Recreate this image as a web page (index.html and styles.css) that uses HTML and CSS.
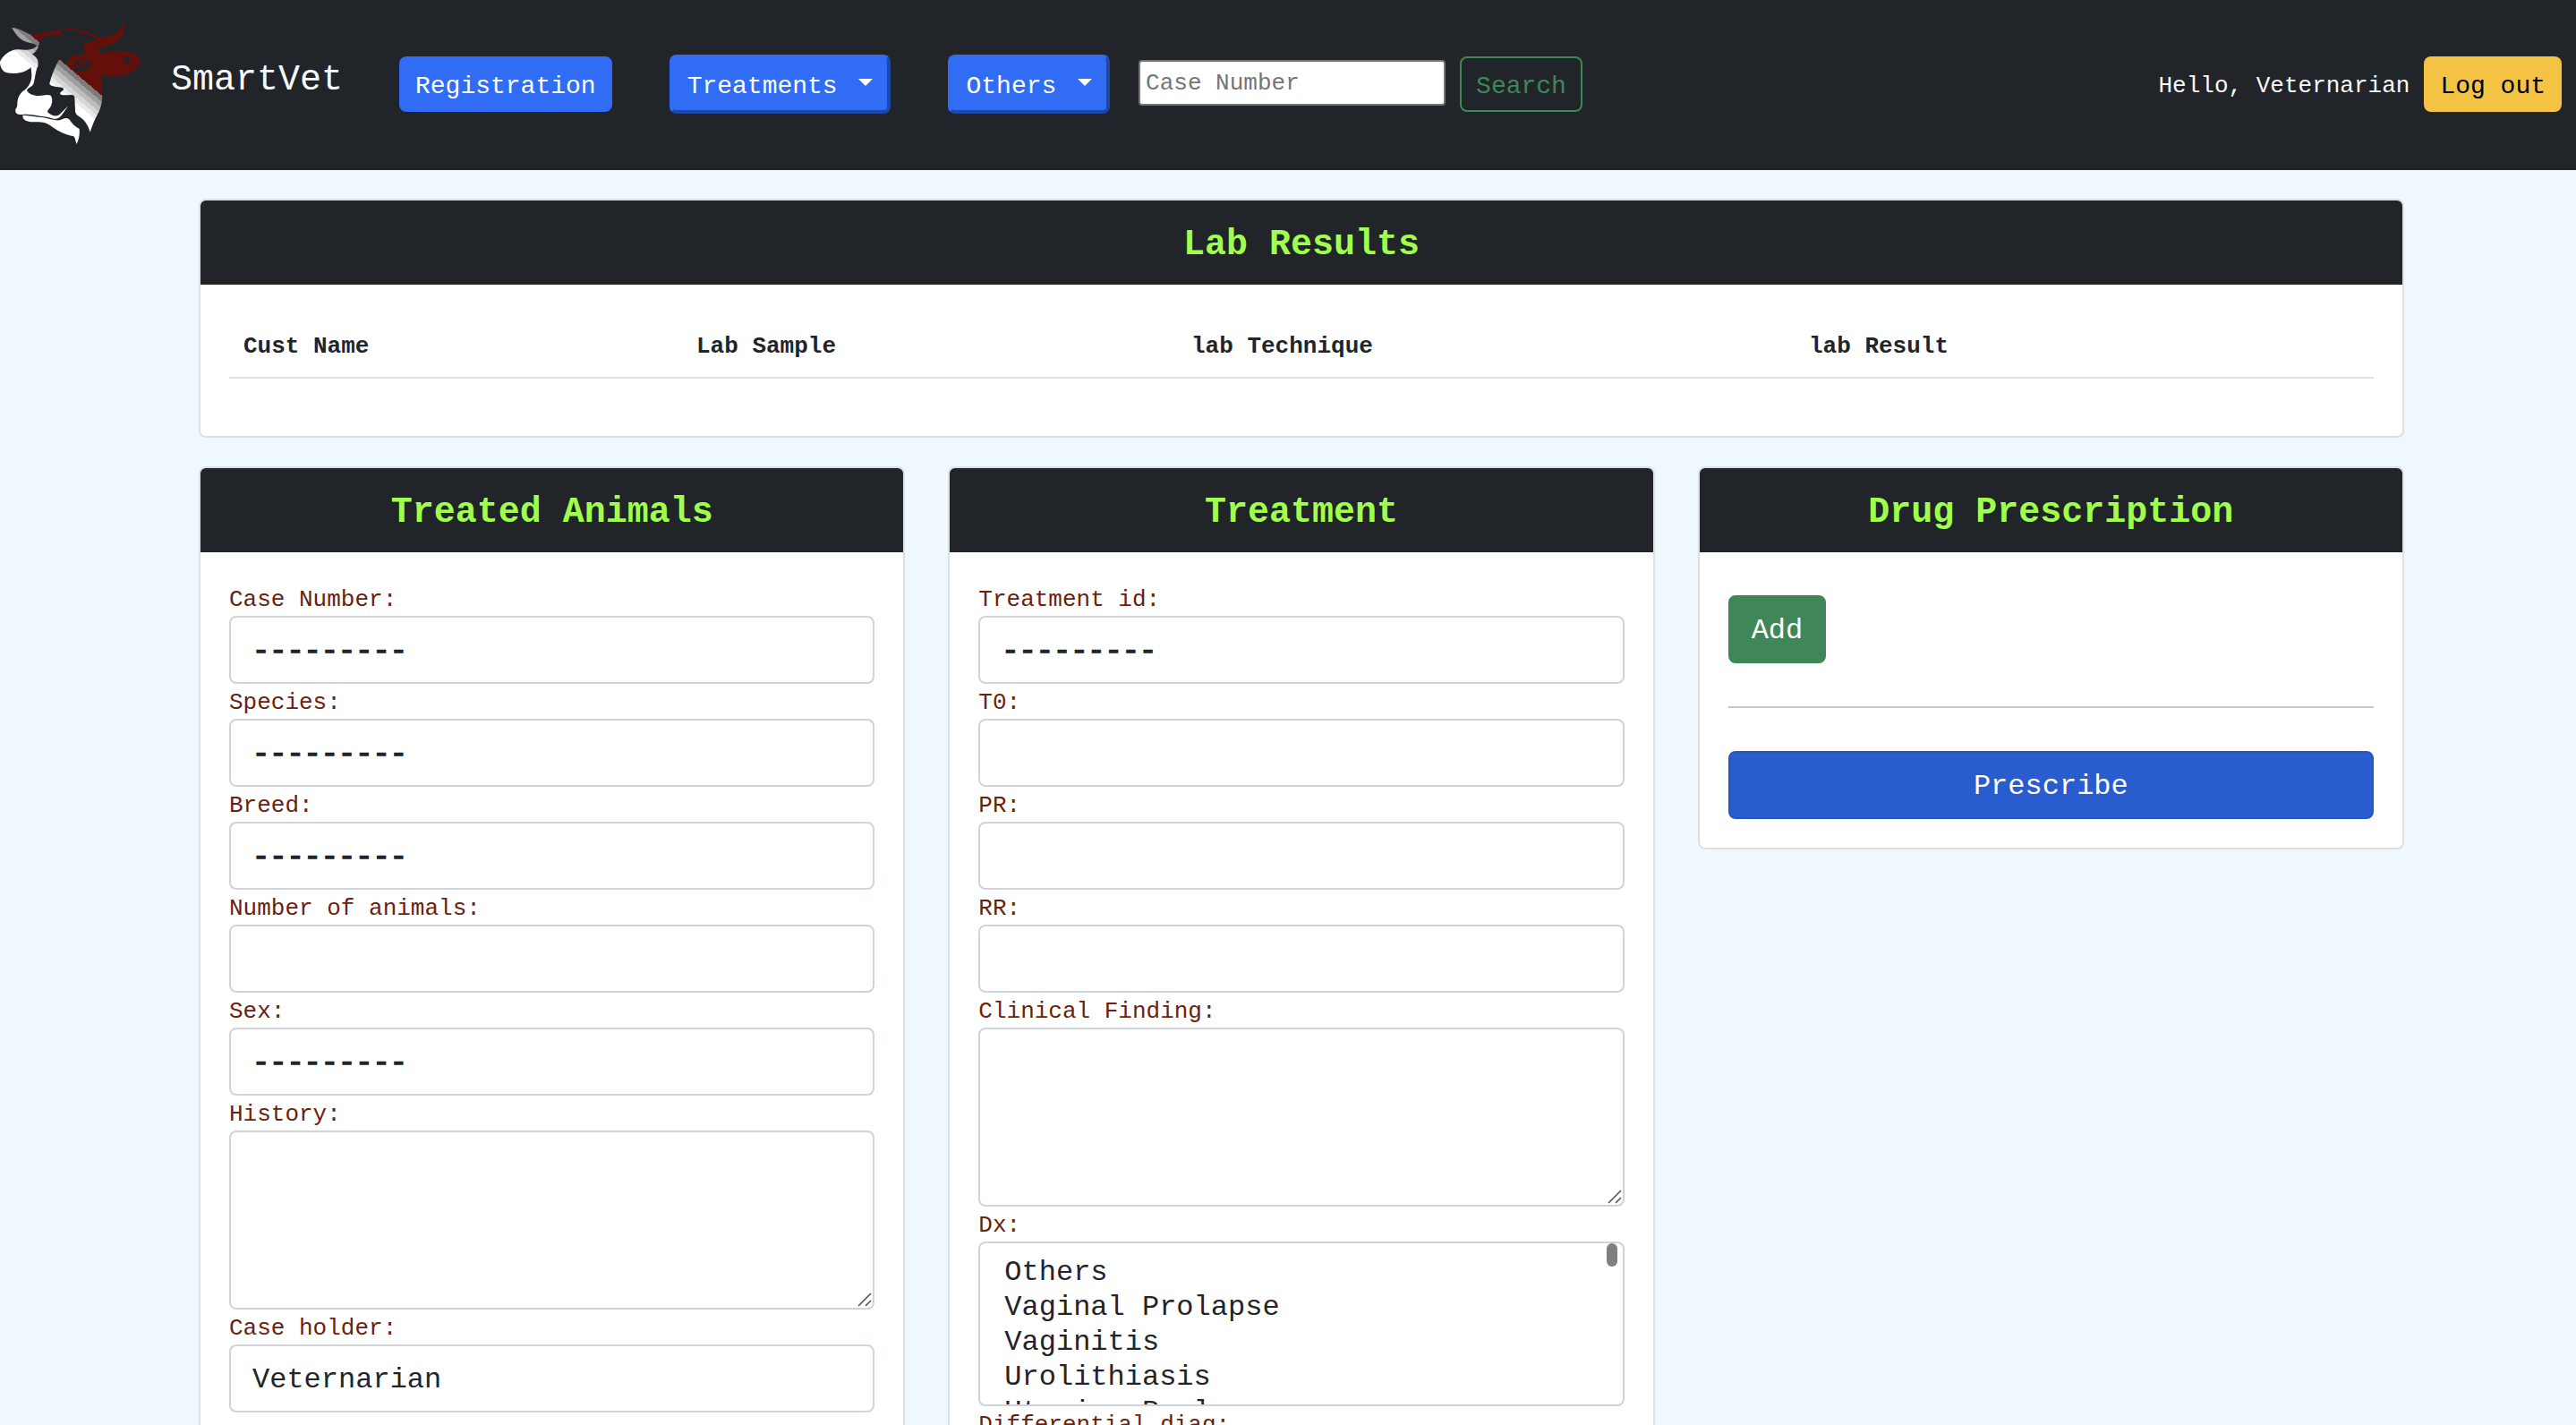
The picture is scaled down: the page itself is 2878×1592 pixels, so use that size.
FILE: index.html
```html
<!DOCTYPE html>
<html lang="en">
<head>
<meta charset="utf-8">
<title>SmartVet</title>
<link rel="stylesheet" href="styles.css">
</head>
<body>
<header class="navbar">
  <svg class="logo" viewBox="0 0 510 510" aria-hidden="true">
    <defs>
      <linearGradient id="fade" gradientUnits="userSpaceOnUse" x1="200" y1="200" x2="149" y2="260">
        <stop offset="0" stop-color="#64100a"/><stop offset="0" stop-color="#7c7c7c"/>
        <stop offset=".2" stop-color="#7c7c7c"/><stop offset=".2" stop-color="#a0a0a0"/>
        <stop offset=".4" stop-color="#a0a0a0"/><stop offset=".4" stop-color="#bebebe"/>
        <stop offset=".6" stop-color="#bebebe"/><stop offset=".6" stop-color="#d6d6d6"/>
        <stop offset=".78" stop-color="#d6d6d6"/><stop offset=".78" stop-color="#ebebeb"/>
        <stop offset=".95" stop-color="#ebebeb"/><stop offset=".95" stop-color="#fff"/>
      </linearGradient>
    </defs>
    <g fill="url(#fade)">
      <path d="M40 93C62 94 80 106 98 114C112 118 122 116 135 112C155 105 178 104 190 102C220 94 250 95 264 101C290 104 308 112 325 120C365 133 400 110 417 76C420 110 402 144 365 152C350 155 338 157 328 162C335 167 334 174 334 183C350 172 385 170 405 171C445 172 468 185 470 203C468 225 440 250 405 254C378 257 355 254 338 249C341 270 343 290 343 322C342 350 335 370 326 385C315 405 308 425 302 443C296 420 285 405 272 395C262 388 252 385 252 370L250 325C248 314 230 320 215 319C203 318 198 315 204 308C217 300 215 296 207 293C195 292 165 290 166 280C172 255 185 222 198 200L204 196L222 218C230 203 238 180 263 178C254 184 249 190 248 195C260 185 280 182 290 180C278 170 278 150 290 143C305 135 322 138 328 132C310 117 285 110 254 107C262 104 250 100 235 100C220 100 205 101 200 105L209 108L205 117C180 118 150 117 140 130C134 138 132 142 130 150C128 165 118 175 108 182C125 190 130 205 127 222C118 240 118 265 112 282C105 293 92 295 90 303C95 315 115 322 130 321C145 320 160 315 170 320C178 330 175 350 168 360C160 370 155 375 165 380C175 388 190 392 200 383L229 355L208 384C202 392 195 400 180 398C160 393 150 390 140 390C120 388 100 382 75 384C60 385 50 380 52 368C54 360 58 360 58 350C58 330 65 312 85 300C95 290 102 280 105 265C108 250 104 240 104 225C85 245 50 250 20 243C8 238 0 225 0 207C10 185 35 165 60 166C85 168 110 170 124 153C112 145 110 146 98 143C70 138 55 120 40 93Z"/>
      <path d="M76 386C100 388 125 392 145 394C165 398 185 405 200 403C215 395 222 393 232 400C240 412 250 425 266 432C268 450 265 465 257 483C252 470 252 460 245 456C220 452 195 440 175 425C155 408 135 408 110 409C90 408 75 402 76 386Z"/>
    </g>
    <path fill="#212529" d="M246 224C252 202 280 190 304 208C312 226 286 246 250 238Z"/>
    <path fill="#64100a" d="M254 227C260 205 282 198 291 210C294 224 278 232 254 227Z"/>
    <path fill="#212529" d="M259 220C264 206 278 205 284 212C284 222 270 226 259 220Z"/>
    <circle fill="#64100a" cx="271" cy="216" r="5"/>
    <path fill="none" stroke="#212529" stroke-width="9" d="M427 189v28M412 203h29"/>
  </svg>
  <a class="brand">SmartVet</a>
  <a class="btn btn-registration">Registration</a>
  <button class="btn btn-drop btn-treatments">Treatments <span class="caret"></span></button>
  <button class="btn btn-drop btn-others">Others <span class="caret"></span></button>
  <input class="search-input" type="text" placeholder="Case Number">
  <button class="btn btn-search">Search</button>
  <span class="hello">Hello, Veternarian</span>
  <a class="btn btn-logout">Log out</a>
</header>

<main class="page">
  <section class="card">
    <h5 class="card-header">Lab Results</h5>
    <div class="card-body">
      <div class="lab-row">
        <span>Cust Name</span><span>Lab Sample</span><span>lab Technique</span><span>lab Result</span>
      </div>
    </div>
  </section>

  <div class="columns">
    <section class="card">
      <h5 class="card-header">Treated Animals</h5>
      <div class="card-body">
        <label>Case Number:</label><div class="field empty">---------</div>
        <label>Species:</label><div class="field empty">---------</div>
        <label>Breed:</label><div class="field empty">---------</div>
        <label>Number of animals:</label><div class="field"></div>
        <label>Sex:</label><div class="field empty">---------</div>
        <label>History:</label>
        <div class="field area"><svg class="grip" viewBox="0 0 16 16"><path d="M1 15L15 1M9 15L15 9"/></svg></div>
        <label>Case holder:</label><div class="field">Veternarian</div>
      </div>
    </section>

    <section class="card">
      <h5 class="card-header">Treatment</h5>
      <div class="card-body">
        <label>Treatment id:</label><div class="field empty">---------</div>
        <label>T0:</label><div class="field"></div>
        <label>PR:</label><div class="field"></div>
        <label>RR:</label><div class="field"></div>
        <label>Clinical Finding:</label>
        <div class="field area"><svg class="grip" viewBox="0 0 16 16"><path d="M1 15L15 1M9 15L15 9"/></svg></div>
        <label>Dx:</label>
        <div class="field list">
          <div>Others</div><div>Vaginal Prolapse</div><div>Vaginitis</div><div>Urolithiasis</div><div>Uterine Prolapse</div>
          <span class="thumb"></span>
        </div>
        <label>Differential diag:</label><div class="field"></div>
      </div>
    </section>

    <section class="card">
      <h5 class="card-header">Drug Prescription</h5>
      <div class="card-body drug">
        <button class="btn-lg btn-add">Add</button>
        <hr>
        <button class="btn-lg btn-prescribe">Prescribe</button>
      </div>
    </section>
  </div>
</main>
</body>
</html>
```

FILE: styles.css
```css
* { box-sizing: border-box; }

html { height: 100%; overflow: hidden; }

body {
  margin: 0;
  height: 1592px;
  overflow: hidden;
  background: #f0f8ff;
  color: #212529;
  font-family: "Courier New", "Liberation Mono", monospace;
  font-size: 26px;
  line-height: 39px;
}

button, input { font-family: inherit; margin: 0; }

/* Top bar */
.navbar {
  display: flex;
  align-items: center;
  height: 190px;
  padding: 0 16px 2px 0;
  background: #212529;
}

.logo {
  flex: none;
  align-self: flex-start;
  width: 170px;
  height: 170px;
}

.brand {
  flex: none;
  width: 276px;
  padding-left: 21px;
  margin-top: -8px;
  font-size: 40px;
  line-height: 60px;
  color: #f8f9fa;
}

.btn {
  flex: none;
  padding: 11px 16px 5px;
  border: 2px solid transparent;
  border-radius: 8px;
  font-size: 28px;
  line-height: 42px;
  color: #fff;
  white-space: pre;
}

.btn-registration { background: #316cf4; border-color: #316cf4; }

.btn-drop {
  display: flex;
  background: #316cf4;
  border: 4px solid;
  border-color: #316cf4 #1e48a6 #1e48a6 #316cf4;
}

.btn-treatments { margin-left: 64px; }
.btn-others { margin-left: 64px; }

.caret {
  margin: 12px 0 0 7px;
  align-self: flex-start;
  border-top: 8px solid #fff;
  border-left: 8px solid transparent;
  border-right: 8px solid transparent;
}

.search-input {
  width: 343px;
  height: 51px;
  margin: -4px 16px 0 32px;
  padding: 2px 6px 0;
  border: 2px solid #767676;
  border-radius: 4px;
  background: #fff;
  font-size: 26px;
}

.search-input::placeholder { color: #757575; opacity: 1; }

.btn-search { background: transparent; border-color: #3f8758; color: #3f8758; }

.hello {
  margin-left: auto;
  padding: 4px 16px 0 0;
  color: #f8f9fa;
}

.btn-logout { background: #f5c344; color: #000; }

/* Cards */
.page { padding: 32px 192px 0 222px; }

.card {
  border: 2px solid #dedfe1;
  border-radius: 8px;
  background: #fff;
  overflow: hidden;
}

.card-header {
  margin: 0;
  height: 94px;
  padding-top: 20px;
  background: #212529;
  color: #a0ff4c;
  font-size: 40px;
  line-height: 60px;
  font-weight: 700;
  text-align: center;
}

.card-body { padding: 32px; }

.lab-row {
  display: grid;
  grid-template-columns: 506px 553px 690px 1fr;
  height: 73px;
  margin-bottom: 32px;
  padding-top: 18px;
  border-bottom: 2px solid #dee2e6;
  font-weight: 700;
}

.lab-row span { padding-left: 16px; }

.columns {
  display: grid;
  grid-template-columns: repeat(3, 1fr);
  gap: 48px;
  margin-top: 32px;
  align-items: start;
}

/* Form fields */
label {
  display: block;
  height: 39px;
  padding-top: 2px;
  color: #6b220c;
}

.field {
  position: relative;
  height: 76px;
  padding: 14px 24px 10px;
  border: 2px solid #ced4da;
  border-radius: 8px;
  font-size: 32px;
  line-height: 48px;
}

.empty { -webkit-text-stroke: 1.6px #212529; }

.area { height: 200px; }

.grip {
  position: absolute;
  right: 1px;
  bottom: 1px;
  width: 16px;
  height: 16px;
  fill: none;
  stroke: #555;
  stroke-width: 1.6;
}

.list {
  height: 184px;
  padding: 13px 27px 0;
  line-height: 39px;
  overflow: hidden;
}

.thumb {
  position: absolute;
  top: 0;
  right: 6px;
  width: 12px;
  height: 26px;
  border-radius: 6px;
  background: #808080;
}

/* Prescription */
.drug {
  display: flex;
  flex-direction: column;
  padding-top: 48px;
}

.btn-lg {
  height: 76px;
  padding: 3px 24px 0;
  border: 2px solid;
  border-radius: 8px;
  color: #fff;
  font-size: 32px;
}

.btn-add { align-self: flex-start; background: #3f8758; border-color: #3f8758; }

.btn-prescribe { background: #285ccf; border-color: #2557c3; }

hr {
  width: 100%;
  height: 2px;
  margin: 48px 0;
  border: 0;
  background: #c7c8c9;
}
```
